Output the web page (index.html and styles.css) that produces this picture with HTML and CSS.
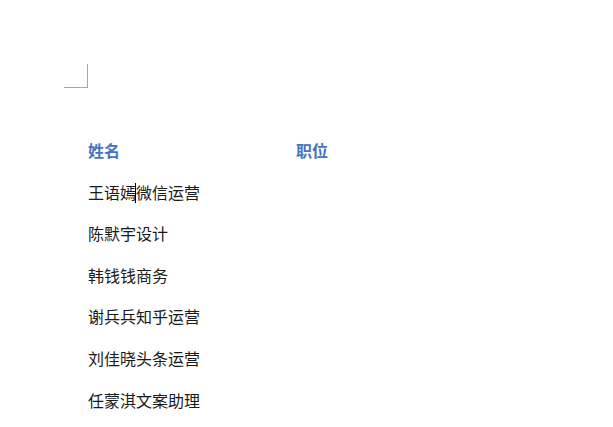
FILE: index.html
```html
<!DOCTYPE html>
<html lang="zh">
<head>
<meta charset="utf-8">
<link rel="stylesheet" href="styles.css">
</head>
<body>
<div class="page">
  <div class="corner"></div>
  <div class="table">
    <div class="row head"><div class="c1">姓名</div><div class="c2">职位</div></div>
    <div class="row"><div class="c1">王语嫣<span class="caret"></span>微信运营</div><div class="c2"></div></div>
    <div class="row"><div class="c1">陈默宇设计</div><div class="c2"></div></div>
    <div class="row"><div class="c1">韩钱钱商务</div><div class="c2"></div></div>
    <div class="row"><div class="c1">谢兵兵知乎运营</div><div class="c2"></div></div>
    <div class="row"><div class="c1">刘佳晓头条运营</div><div class="c2"></div></div>
    <div class="row"><div class="c1">任蒙淇文案助理</div><div class="c2"></div></div>
  </div>
</div>
</body>
</html>
```
FILE: styles.css
```css
html, body {
  margin: 0;
  padding: 0;
  background: #ffffff;
}
.page {
  width: 613px;
  height: 427px;
  overflow: hidden;
  padding: 64px 0 0 64px;
  box-sizing: border-box;
  font-family: "Noto Sans CJK SC", "Microsoft YaHei", sans-serif;
  font-size: 16px;
  color: #1a1a1a;
}
.corner {
  width: 23px;
  height: 23px;
  border-right: 1px solid #a6a6a6;
  border-bottom: 1px solid #a6a6a6;
}
.table {
  margin-top: 42px;
  margin-left: 24px;
}
.row {
  display: grid;
  grid-template-columns: 208px 200px;
  height: 41.6px;
  line-height: 41.6px;
}
.head {
  color: #4472c4;
  font-weight: 700;
}
.caret {
  display: inline-block;
  width: 0;
  height: 20px;
  border-left: 1px solid #000000;
  vertical-align: -4px;
  margin-left: -1px;
}
```
